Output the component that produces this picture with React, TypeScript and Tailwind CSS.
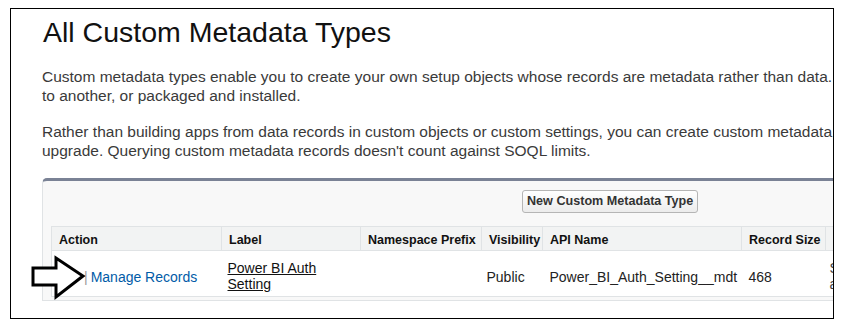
import React from "react";

const headers = [
  { name: "Action", w: "w-[170px]" },
  { name: "Label", w: "w-[139px]" },
  { name: "Namespace Prefix", w: "w-[121px]" },
  { name: "Visibility", w: "w-[61px]" },
  { name: "API Name", w: "w-[199px]" },
  { name: "Record Size", w: "w-[84px]" },
  { name: "Description", w: "w-[120px]" },
];

const Arrow = () => (
  <svg
    className="absolute left-[20px] top-[246px]"
    width="60"
    height="48"
    viewBox="0 0 60 48"
  >
    <polygon
      points="2,13 25,13 25,3 52,21 25,42 25,30 2,30"
      fill="#fff"
      stroke="#000"
      strokeWidth="3"
      strokeLinejoin="miter"
    />
  </svg>
);

const App = () => {
  return (
    <div className="bg-white w-[842px] h-[326px] pt-[8px] pl-[10px] font-['Liberation_Sans',Arial,sans-serif]">
      <div className="relative w-[824px] h-[311px] border border-black overflow-hidden">
        <h1 className="pl-[32px] pt-[6px] text-[28.5px] leading-[34px] text-[#111] font-normal">
          All Custom Metadata Types
        </h1>

        <div className="pl-[31px] pt-[18px] text-[15.5px] leading-[19px] text-[#3a3a3a] whitespace-nowrap">
          <div>
            Custom metadata types enable you to create your own setup objects
            whose records are metadata rather than data.
          </div>
          <div>to another, or packaged and installed.</div>
          <div className="mt-[17px]">
            Rather than building apps from data records in custom objects or
            custom settings, you can create custom metadata
          </div>
          <div>
            upgrade. Querying custom metadata records doesn't count against
            SOQL limits.
          </div>
        </div>

        {/* page block */}
        <div className="mt-[18px] ml-[31px] w-[900px] bg-[#f8f8f8] border-t-[3px] border-t-[#7a8295] border-l border-b border-[#e0e3e5] rounded-tl-[5px] pb-[3px]">
          <div className="pl-[479px] pt-[7px] h-[45px]">
            <button className="h-[23px] px-[4px] rounded-[3px] border border-[#b5b5b5] bg-gradient-to-b from-white to-[#ececec] text-[12.6px] font-bold text-[#333]">
              New Custom Metadata Type
            </button>
          </div>

          <table className="ml-[8px] table-fixed w-[894px] border-collapse border-l border-[#e0e3e5] bg-white text-[14px] text-[#222]">
            <thead>
              <tr className="bg-[#f2f3f3] h-[23px]">
                {headers.map((h) => (
                  <th
                    key={h.name}
                    className={`${h.w} border-y border-r border-[#e0e3e5] px-[7px] pt-[4px] text-left text-[12.5px] font-bold text-[#111] align-middle whitespace-nowrap overflow-hidden`}
                  >
                    {h.name}
                  </th>
                ))}
              </tr>
            </thead>
            <tbody>
              <tr className="h-[46px] border-b border-[#e0e3e5] align-middle">
                <td className="px-[7px] pt-[8px] whitespace-nowrap">
                  <span className="text-[#999] pl-[25px] pr-[3px]">|</span>
                  <span className="text-[#015ba7]">Manage Records</span>
                </td>
                <td className="px-[6px] pt-[6px] leading-[16px] underline text-[#111]">
                  Power BI Auth
                  <br />
                  Setting
                </td>
                <td className="px-[7px]"></td>
                <td className="px-[5px] pt-[8px]">Public</td>
                <td className="px-[7px] pt-[8px] whitespace-nowrap">
                  Power_BI_Auth_Setting__mdt
                </td>
                <td className="px-[7px] pt-[8px]">468</td>
                <td className="px-[4px] pt-[6px] leading-[16px] text-[#444]">
                  Stores
                  <br />
                  auth
                </td>
              </tr>
            </tbody>
          </table>
        </div>

        <Arrow />
      </div>
    </div>
  );
};

export default App;
